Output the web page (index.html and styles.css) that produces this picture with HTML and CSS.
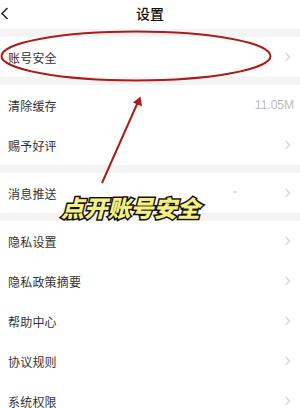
FILE: index.html
```html
<!DOCTYPE html>
<html lang="zh">
<head>
<meta charset="utf-8">
<link rel="stylesheet" href="styles.css">
</head>
<body>
<div class="page">
  <header class="topbar">
    <svg class="back" width="9" height="13" viewBox="0 0 9 13"><path d="M7.5 1 L2 6.5 L7.5 12" fill="none" stroke="#222" stroke-width="1.5"/></svg>
    <h1 class="title">设置</h1>
  </header>
  <section class="group">
    <div class="row"><span class="label">账号安全</span><span class="chev"></span></div>
  </section>
  <section class="group">
    <div class="row"><span class="label">清除缓存</span><span class="value">11.05M</span></div>
    <div class="row"><span class="label">赐予好评</span><span class="chev"></span></div>
  </section>
  <section class="group">
    <div class="row"><span class="label">消息推送</span><span class="chev"></span></div>
  </section>
  <section class="group">
    <div class="row"><span class="label">隐私设置</span><span class="chev"></span></div>
    <div class="row"><span class="label">隐私政策摘要</span><span class="chev"></span></div>
    <div class="row"><span class="label">帮助中心</span><span class="chev"></span></div>
    <div class="row"><span class="label">协议规则</span><span class="chev"></span></div>
    <div class="row"><span class="label">系统权限</span><span class="chev"></span></div>
  </section>

  <svg class="marks" width="300" height="408" viewBox="0 0 300 408">
    <ellipse cx="136" cy="56" rx="134.5" ry="24.5" fill="none" stroke="#ad1c1a" stroke-width="2"/>
    <line x1="102" y1="183" x2="137.5" y2="103" stroke="#ad1c1a" stroke-width="2"/>
    <path d="M140.5 96.5 L142 106.5 L133 102.5 Z" fill="#ad1c1a"/>
    <circle cx="235" cy="192" r="0.8" fill="#e08080"/>
  </svg>
  <div class="caption">点开账号安全</div>
</div>
</body>
</html>
```
FILE: styles.css
```css
html, body {
  margin: 0;
  padding: 0;
}
body {
  width: 300px;
  height: 408px;
  overflow: hidden;
  background: #f4f4f4;
  font-family: "Noto Sans CJK SC", "Noto Sans", sans-serif;
}
.page {
  position: relative;
  width: 300px;
  height: 408px;
  display: flex;
  flex-direction: column;
  gap: 8px;
}
.topbar {
  flex: 0 0 29px;
  background: #fff;
  display: flex;
  align-items: center;
  justify-content: center;
  position: relative;
}
.back {
  position: absolute;
  left: 0;
  top: 7px;
}
.title {
  margin: 0;
  font-size: 14px;
  font-weight: 500;
  color: #111;
  line-height: 1;
  margin-top: -3px;
}
.group {
  background: #fff;
  display: flex;
  flex-direction: column;
}
.row {
  height: 40px;
  display: flex;
  align-items: center;
  justify-content: space-between;
  padding: 0 9px 0 8px;
}
.label {
  font-size: 12px;
  color: #333;
  letter-spacing: 0.2px;
}
.value {
  font-family: "Liberation Sans", Arial, sans-serif;
  font-size: 12px;
  color: #bdbdbd;
  margin-right: -3px;
}
.chev {
  width: 5px;
  height: 5px;
  border-top: 1px solid #cfcfcf;
  border-right: 1px solid #cfcfcf;
  transform: rotate(45deg);
  margin-right: 2px;
}
.marks {
  position: absolute;
  left: 0;
  top: 0;
}
.caption {
  position: absolute;
  left: 61px;
  top: 193px;
  font-size: 23px;
  font-weight: 900;
  font-style: italic;
  line-height: 28px;
  color: #f6ef84;
  letter-spacing: 0.2px;
  -webkit-text-stroke: 3px #111;
  paint-order: stroke fill;
}
```
